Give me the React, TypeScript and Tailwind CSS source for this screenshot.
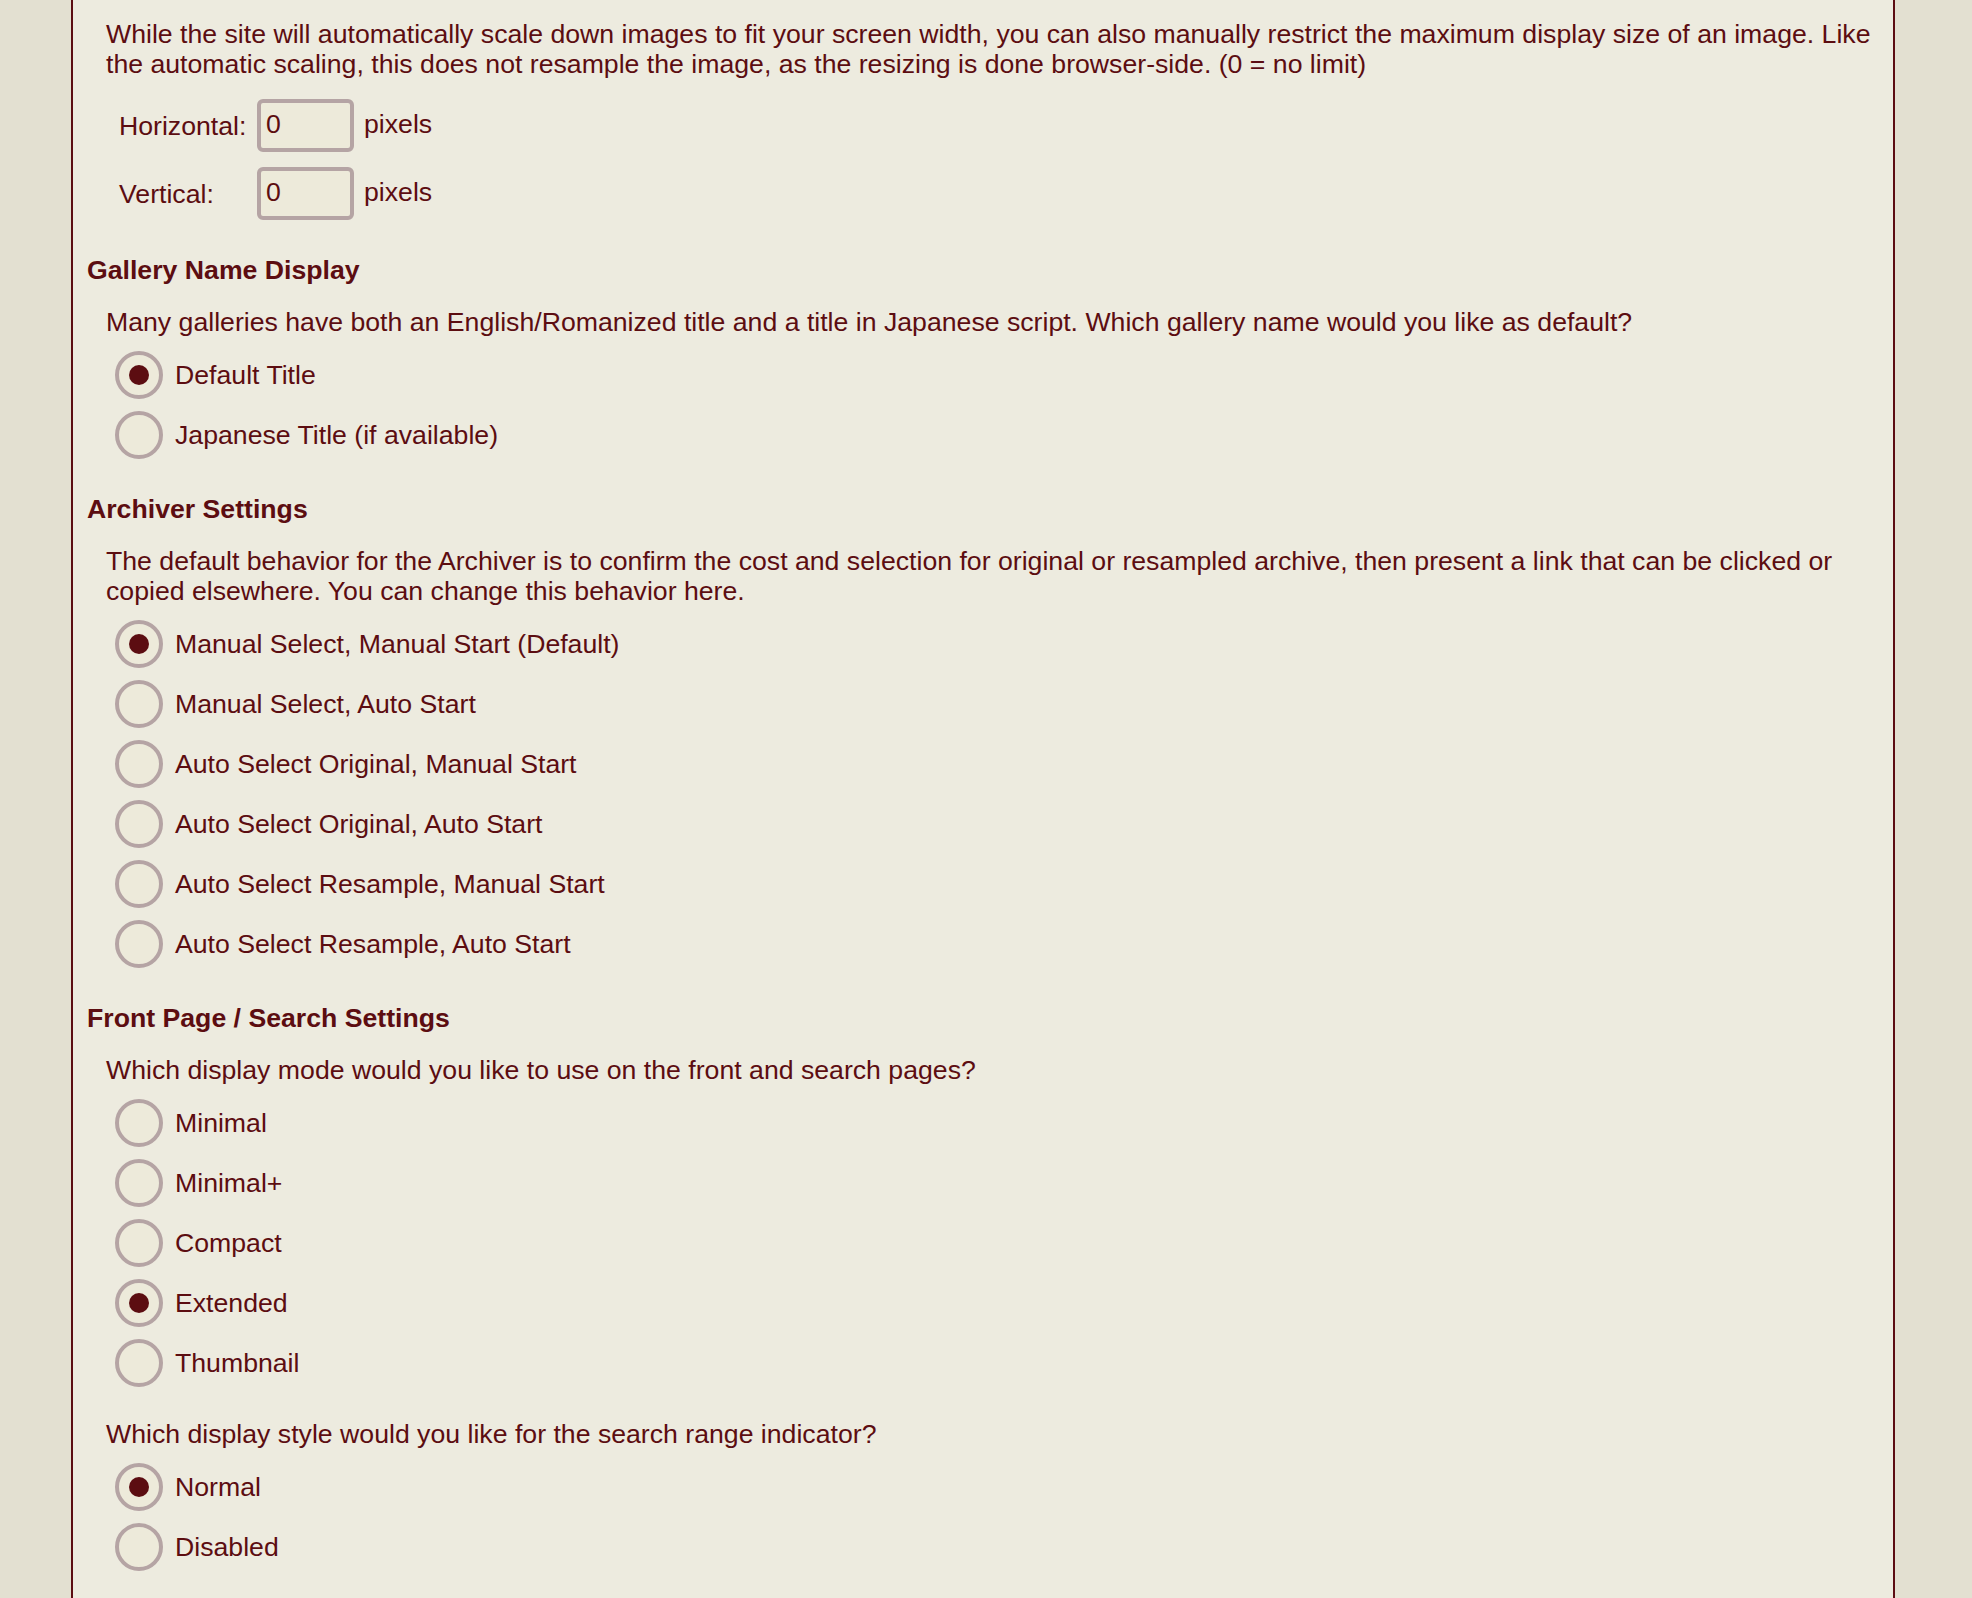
import React from "react";

type Opt = { label: string; checked?: boolean };

function Radio({ label, checked }: Opt) {
  return (
    <label className="flex items-center gap-[12px] cursor-pointer">
      <span className="flex h-[48px] w-[48px] shrink-0 items-center justify-center rounded-full border-4 border-[#b5a4a4] bg-[#edeada]">
        {checked ? <span className="block h-[20px] w-[20px] rounded-full bg-[#5c0d11]" /> : null}
      </span>
      <span>{label}</span>
    </label>
  );
}

function RadioList({ options }: { options: Opt[] }) {
  return (
    <div className="mt-[14px] flex flex-col gap-[12px] pl-[42px]">
      {options.map((o) => (
        <Radio key={o.label} label={o.label} checked={o.checked} />
      ))}
    </div>
  );
}

function Heading({ children }: { children: React.ReactNode }) {
  return <h2 className="mt-[35px] pl-[14px] font-bold">{children}</h2>;
}

function Para({ children, className = "mt-[22px]" }: { children: React.ReactNode; className?: string }) {
  return <p className={`${className} pl-[33px] pr-[10px]`}>{children}</p>;
}

function SizeRow({ label }: { label: string }) {
  return (
    <>
      <div>{label}</div>
      <div className="flex items-baseline">
        <input
          type="text"
          readOnly
          value="0"
          className="box-border h-[53px] w-[97px] rounded-[6px] border-4 border-[#b5a4a4] bg-[#edeada] px-[5px] pt-0 pb-[3px] text-[26.67px] leading-[30px] text-[#5c0d11] outline-none"
        />
        <span className="ml-[10px]">pixels</span>
      </div>
    </>
  );
}

export default function App() {
  return (
    <div className="min-h-screen bg-[#e3e0d1] font-['Liberation_Sans',Arial,Helvetica,sans-serif] text-[26.67px] leading-[30px] text-[#5c0d11]">
      <div className="ml-[71px] w-[1824px] border-x-2 border-[#5c0d12] bg-[#edebdf] pt-[19px] pb-[60px]">
        <Para className="">
          While the site will automatically scale down images to fit your screen width, you can also manually restrict the maximum display size of an image. Like the automatic scaling, this does not resample the image, as the resizing is done browser-side. (0 = no limit)
        </Para>
        <div className="mt-[20px] ml-[46px] grid grid-cols-[138px_auto] items-center justify-start gap-y-[15px]">
          <SizeRow label="Horizontal:" />
          <SizeRow label="Vertical:" />
        </div>

        <Heading>Gallery Name Display</Heading>
        <Para>
          Many galleries have both an English/Romanized title and a title in Japanese script. Which gallery name would you like as default?
        </Para>
        <RadioList
          options={[
            { label: "Default Title", checked: true },
            { label: "Japanese Title (if available)" },
          ]}
        />

        <Heading>Archiver Settings</Heading>
        <Para>
          The default behavior for the Archiver is to confirm the cost and selection for original or resampled archive, then present a link that can be clicked or copied elsewhere. You can change this behavior here.
        </Para>
        <RadioList
          options={[
            { label: "Manual Select, Manual Start (Default)", checked: true },
            { label: "Manual Select, Auto Start" },
            { label: "Auto Select Original, Manual Start" },
            { label: "Auto Select Original, Auto Start" },
            { label: "Auto Select Resample, Manual Start" },
            { label: "Auto Select Resample, Auto Start" },
          ]}
        />

        <Heading>Front Page / Search Settings</Heading>
        <Para>Which display mode would you like to use on the front and search pages?</Para>
        <RadioList
          options={[
            { label: "Minimal" },
            { label: "Minimal+" },
            { label: "Compact" },
            { label: "Extended", checked: true },
            { label: "Thumbnail" },
          ]}
        />
        <Para className="mt-[32px]">Which display style would you like for the search range indicator?</Para>
        <RadioList
          options={[
            { label: "Normal", checked: true },
            { label: "Disabled" },
          ]}
        />
      </div>
    </div>
  );
}
